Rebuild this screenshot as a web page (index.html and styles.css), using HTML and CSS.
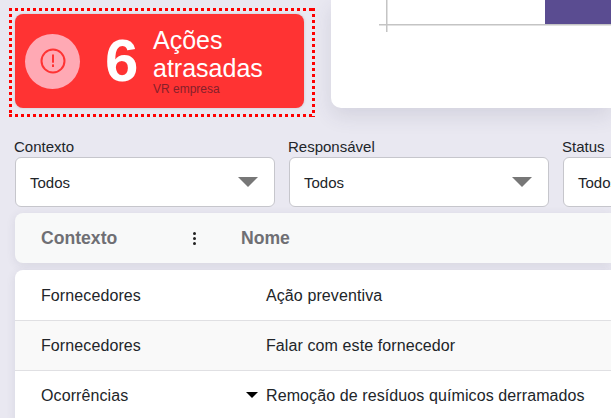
FILE: index.html
```html
<!DOCTYPE html>
<html lang="en">
<head>
    <meta charset="UTF-8">
    <meta name="viewport" content="width=device-width, initial-scale=1.0">
    <title>Ações atrasadas</title>
    <link rel="stylesheet" href="styles.css">
</head>
<body>

    <div class="top-row">
        <div class="alert-outline">
            <div class="alert-card">
                <div class="alert-icon">
                    <svg width="28" height="28" viewBox="0 0 28 28">
                        <circle cx="14" cy="14" r="11.5" fill="none" stroke="#ff3333" stroke-width="2"/>
                        <rect x="13" y="7.5" width="2" height="8.2" fill="#ff3333"/>
                        <rect x="13" y="17.4" width="2" height="2.6" fill="#ff3333"/>
                    </svg>
                </div>
                <div class="alert-count">6</div>
                <div class="alert-text">
                    <div class="alert-title">Ações atrasadas</div>
                    <div class="alert-sub">VR empresa</div>
                </div>
            </div>
        </div>
        <div class="chart-card">
            <svg class="chart" width="280" height="94" viewBox="0 0 280 94">
                <rect x="214" y="0" width="66" height="24" fill="#5a4c91"/>
                <rect x="48" y="24" width="232" height="1.5" fill="#c4c4c4"/>
                <rect x="55" y="0" width="1.5" height="32" fill="#c4c4c4"/>
            </svg>
        </div>
    </div>

    <div class="filters">
        <div class="filter">
            <label>Contexto</label>
            <div class="select"><span>Todos</span><i class="caret"></i></div>
        </div>
        <div class="filter">
            <label>Responsável</label>
            <div class="select"><span>Todos</span><i class="caret"></i></div>
        </div>
        <div class="filter">
            <label>Status</label>
            <div class="select"><span>Todos</span><i class="caret"></i></div>
        </div>
    </div>

    <div class="table-head">
        <div class="col-context">Contexto <span class="dots"><b></b><b></b><b></b></span></div>
        <div class="col-name">Nome</div>
    </div>

    <div class="table-body">
        <div class="row">
            <div class="col-context">Fornecedores</div>
            <div class="col-name">Ação preventiva</div>
        </div>
        <div class="row alt">
            <div class="col-context">Fornecedores</div>
            <div class="col-name">Falar com este fornecedor</div>
        </div>
        <div class="row">
            <div class="col-context">Ocorrências</div>
            <div class="col-name"><i class="sort"></i>Remoção de resíduos químicos derramados</div>
        </div>
    </div>

</body>
</html>
```

FILE: styles.css
```css
html, body {
    height: 100%;
}

body {
    font-family: "Liberation Sans", Arial, sans-serif;
    margin: 0;
    padding: 0;
    background-color: #e9e8f1;
    color: #212529;
    overflow: hidden;
    width: 611px;
    height: 418px;
}

.top-row {
    display: flex;
    height: 94px;
    padding-top: 14px;
}

.alert-outline {
    position: relative;
    flex: none;
    margin-left: 15px;
    width: 289px;
}

/* square dots, a dotted outline would draw them round */
.alert-outline::before {
    content: "";
    position: absolute;
    left: -6px;
    top: -6px;
    width: 306px;
    height: 109px;
    background:
        repeating-linear-gradient(90deg, #f00 0 3px, transparent 3px 6px) top / 100% 3px no-repeat,
        repeating-linear-gradient(90deg, #f00 0 3px, transparent 3px 6px) bottom / 100% 3px no-repeat,
        repeating-linear-gradient(180deg, #f00 0 3px, transparent 3px 6px) left / 3px 100% no-repeat,
        repeating-linear-gradient(180deg, #f00 0 3px, transparent 3px 6px) right / 3px 100% no-repeat;
}

.alert-card {
    display: flex;
    align-items: center;
    height: 94px;
    background-color: #ff3333;
    border-radius: 8px;
    box-shadow: 0 0 3px rgba(0, 0, 0, 0.15);
    color: white;
}

.alert-icon {
    display: flex;
    flex: none;
    align-items: center;
    justify-content: center;
    width: 55px;
    height: 55px;
    margin-left: 10px;
    border-radius: 50%;
    background-color: #ffa9b4;
}

.alert-count {
    flex: none;
    width: 48px;
    margin-left: 25px;
    font-size: 60px;
    font-weight: bold;
    line-height: 60px;
}

.alert-text {
    width: 130px;
}

.alert-title {
    font-size: 25px;
    line-height: 28px;
}

.alert-sub {
    font-size: 12px;
    line-height: 14px;
    color: #85202a;
}

.chart-card {
    flex: 1;
    margin-left: 27px;
    margin-top: -14px;
    height: 108px;
    background-color: white;
    border-radius: 0 0 0 10px;
    box-shadow: 0 8px 20px rgba(60, 60, 90, 0.12);
    overflow: hidden;
}

.chart {
    display: block;
}

.filters {
    display: flex;
    gap: 14px;
    margin-top: 30px;
    padding-left: 15px;
}

.filter {
    flex: 0 0 260px;
}

.filter label {
    display: block;
    font-size: 15px;
    line-height: 17px;
    margin: 0 0 2px -1px;
}

.select {
    display: flex;
    align-items: center;
    justify-content: space-between;
    box-sizing: border-box;
    height: 50px;
    padding: 0 16px 0 14px;
    background-color: white;
    border: 1px solid #c6c6cc;
    border-radius: 6px;
    font-size: 15px;
}

.caret {
    width: 0;
    height: 0;
    border-left: 10px solid transparent;
    border-right: 10px solid transparent;
    border-top: 10px solid #777;
}

.table-head {
    display: flex;
    align-items: center;
    height: 50px;
    margin: 6px 0 0 15px;
    background-color: #f8f9f9;
    border-radius: 8px 0 0 8px;
    box-shadow: 0 2px 10px rgba(60, 60, 90, 0.1);
    font-size: 17.6px;
    font-weight: bold;
    color: #6f6f74;
}

.col-context {
    display: flex;
    justify-content: space-between;
    align-items: center;
    box-sizing: border-box;
    width: 251px;
    padding-left: 26px;
}

.table-head .col-context {
    width: 226px;
    padding-right: 45px;
}

.dots {
    display: flex;
    flex-direction: column;
    gap: 2px;
}

.dots b {
    width: 3px;
    height: 3px;
    border-radius: 50%;
    background-color: #222;
}

.table-body {
    margin: 7px 0 0 15px;
    background-color: white;
    border-radius: 8px 0 0 0;
    box-shadow: 0 2px 10px rgba(60, 60, 90, 0.1);
    font-size: 16px;
    letter-spacing: 0.1px;
}

.row {
    display: flex;
    align-items: center;
    height: 49px;
    padding-top: 1px;
    border-bottom: 1px solid #e0e0e3;
}

.row + .row {
    padding-top: 0;
}

.row.alt {
    background-color: #f9f9f9;
}

.col-name {
    position: relative;
    white-space: nowrap;
}

.sort {
    position: absolute;
    left: -20px;
    top: 5px;
    width: 0;
    height: 0;
    border-left: 6px solid transparent;
    border-right: 6px solid transparent;
    border-top: 6px solid #000;
}
```
